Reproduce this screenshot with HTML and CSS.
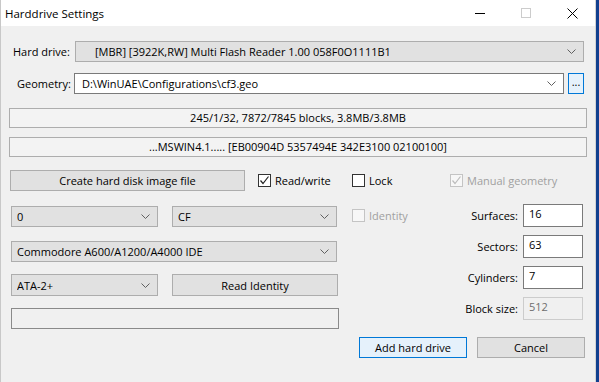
FILE: index.html
```html
<!DOCTYPE html>
<html lang="en">
<head>
    <meta charset="UTF-8">
    <title>Harddrive Settings</title>
    <link rel="stylesheet" href="styles.css">
</head>
<body>
    <div class="window">
        <div class="titlebar">
            <div class="title">Harddrive Settings</div>
            <div class="caption-btn"><span class="min-line"></span></div>
            <div class="caption-btn"><span class="max-box"></span></div>
            <div class="caption-btn">
                <svg width="11" height="11" viewBox="0 0 11 11"><path d="M0.5 0.5 L10.5 10.5 M10.5 0.5 L0.5 10.5" stroke="#000" stroke-width="1" fill="none"/></svg>
            </div>
        </div>

        <div class="dialog">
            <!-- drive + geometry -->
            <div class="row row-drive">
                <label class="lbl lbl-drive">Hard drive:</label>
                <div class="combo combo-drive">
                    <span class="combo-text indent">[MBR] [3922K,RW] Multi Flash Reader 1.00 058F0O1111B1</span>
                    <svg class="chev" width="9" height="5" viewBox="0 0 9 5"><polyline points="0.5,0.5 4.5,4.5 8.5,0.5" stroke="#606060" fill="none"/></svg>
                </div>
            </div>

            <div class="row row-geo">
                <label class="lbl lbl-geo">Geometry:</label>
                <div class="combo edit combo-geo">
                    <span class="combo-text">D:\WinUAE\Configurations\cf3.geo</span>
                    <svg class="chev" width="9" height="5" viewBox="0 0 9 5"><polyline points="0.5,0.5 4.5,4.5 8.5,0.5" stroke="#606060" fill="none"/></svg>
                </div>
                <div class="btn btn-default btn-dots">...</div>
            </div>

            <div class="info info-first">245/1/32, 7872/7845 blocks, 3.8MB/3.8MB</div>
            <div class="info">...MSWIN4.1..... [EB00904D 5357494E 342E3100 02100100]</div>

            <!-- buttons and checks -->
            <div class="row row-checks">
                <div class="btn btn-create">Create hard disk image file</div>
                <div class="check check-rw">
                    <span class="box checked">
                        <svg width="11" height="11" viewBox="0 0 11 11"><polyline points="1.5,5.5 4,8.5 9.5,1.5" stroke="#222" stroke-width="1.2" fill="none"/></svg>
                    </span>
                    <span>Read/write</span>
                </div>
                <div class="check check-lock">
                    <span class="box"></span>
                    <span>Lock</span>
                </div>
                <div class="check disabled">
                    <span class="box">
                        <svg width="11" height="11" viewBox="0 0 11 11"><polyline points="1.5,5.5 4,8.5 9.5,1.5" stroke="#bcbcbc" stroke-width="1.2" fill="none"/></svg>
                    </span>
                    <span>Manual geometry</span>
                </div>
            </div>

            <div class="lower">
                <div class="left">
                    <div class="row row-pair">
                        <div class="combo combo-small">
                            <span class="combo-text">0</span>
                            <svg class="chev" width="9" height="5" viewBox="0 0 9 5"><polyline points="0.5,0.5 4.5,4.5 8.5,0.5" stroke="#606060" fill="none"/></svg>
                        </div>
                        <div class="combo combo-cf">
                            <span class="combo-text">CF</span>
                            <svg class="chev" width="9" height="5" viewBox="0 0 9 5"><polyline points="0.5,0.5 4.5,4.5 8.5,0.5" stroke="#606060" fill="none"/></svg>
                        </div>
                    </div>
                    <div class="combo combo-ctrl">
                        <span class="combo-text">Commodore A600/A1200/A4000 IDE</span>
                        <svg class="chev" width="9" height="5" viewBox="0 0 9 5"><polyline points="0.5,0.5 4.5,4.5 8.5,0.5" stroke="#606060" fill="none"/></svg>
                    </div>
                    <div class="row row-ata">
                        <div class="combo combo-small">
                            <span class="combo-text">ATA-2+</span>
                            <svg class="chev" width="9" height="5" viewBox="0 0 9 5"><polyline points="0.5,0.5 4.5,4.5 8.5,0.5" stroke="#606060" fill="none"/></svg>
                        </div>
                        <div class="btn btn-identity">Read Identity</div>
                    </div>
                    <div class="readonly"></div>
                </div>

                <div class="right">
                    <div class="field field-first">
                        <div class="check disabled check-id">
                            <span class="box"></span>
                            <span>Identity</span>
                        </div>
                        <label class="flbl">Surfaces:</label>
                        <div class="input">16</div>
                    </div>
                    <div class="field">
                        <label class="flbl">Sectors:</label>
                        <div class="input">63</div>
                    </div>
                    <div class="field">
                        <label class="flbl">Cylinders:</label>
                        <div class="input">7</div>
                    </div>
                    <div class="field">
                        <label class="flbl">Block size:</label>
                        <div class="input input-disabled">512</div>
                    </div>
                    <div class="actions">
                        <div class="btn btn-default btn-action">Add hard drive</div>
                        <div class="btn btn-action">Cancel</div>
                    </div>
                </div>
            </div>
        </div>
    </div>
</body>
</html>
```

FILE: styles.css
```css
* {
    margin: 0;
    padding: 0;
    box-sizing: border-box;
}

body {
    background: #12408f;
    width: 599px;
    height: 382px;
    overflow: hidden;
    font-family: "Segoe UI", "Open Sans", "Liberation Sans", sans-serif;
    font-size: 11px;
    line-height: 15px;
    color: #000;
    white-space: nowrap;
}

.window {
    width: 596px;
    height: 382px;
    background: #f0f0f0;
    border-right: 1px solid #d4d4d4;
    border-left: 1px solid #c8c8c8;
}

.titlebar {
    height: 26px;
    background: #fff;
    display: flex;
    align-items: center;
}

.title {
    flex: 1;
    padding-left: 4px;
    font-size: 11.5px;
}

.caption-btn {
    width: 46px;
    height: 26px;
    display: flex;
    align-items: center;
    justify-content: center;
}

.min-line {
    width: 10px;
    height: 1px;
    background: #000;
}

.max-box {
    width: 10px;
    height: 10px;
    border: 1px solid #cccccc;
}

.dialog {
    padding-top: 15px;
}

.row {
    display: flex;
    align-items: center;
}

.lbl {
    flex-shrink: 0;
}

.lbl-drive {
    width: 74px;
    padding-left: 12px;
}

.lbl-geo {
    width: 73px;
    padding-left: 16px;
}

.row-geo {
    margin-top: 11px;
}

/* combo boxes */
.combo {
    height: 21px;
    background: #e1e1e1;
    border: 1px solid #adadad;
    display: flex;
    align-items: center;
    padding: 0 7px 0 5px;
}

.combo-text {
    flex: 1;
    overflow: hidden;
}

.combo-text.indent {
    padding-left: 14px;
}

.chev {
    flex-shrink: 0;
}

.combo.edit {
    background: #fff;
    border-color: #7a7a7a;
    padding-left: 7px;
}

.combo-drive {
    width: 509px;
}

.combo-geo {
    width: 490px;
}

.btn {
    height: 21px;
    background: #e1e1e1;
    border: 1px solid #adadad;
    display: flex;
    align-items: center;
    justify-content: center;
}

.btn-default {
    background: #e5f1fb;
    border-color: #0078d7;
}

.btn-dots {
    width: 16px;
    margin-left: 4px;
    padding-bottom: 4px;
}

.info {
    margin: 9px 0 0 8px;
    width: 578px;
    height: 20px;
    background: #f3f3f3;
    border: 1px solid #adadad;
    text-align: center;
    line-height: 18px;
}

.info-first {
    margin-top: 14px;
}

.row-checks {
    margin-top: 13px;
    padding-left: 9px;
}

.btn-create {
    width: 235px;
}

.check {
    display: flex;
    align-items: center;
    gap: 4px;
}

.box {
    width: 13px;
    height: 13px;
    border: 1px solid #333;
    background: #fff;
    display: flex;
    align-items: center;
    justify-content: center;
}

.check.disabled {
    color: #a0a0a0;
}

.check.disabled .box {
    border-color: #c4c4c4;
    background: #f7f7f7;
}

.check-rw {
    margin-left: 13px;
    width: 94px;
}

.check-lock {
    width: 98px;
}

/* lower area */
.lower {
    display: flex;
    margin-top: 13px;
    padding-left: 10px;
}

.left {
    width: 328px;
    padding-top: 2px;
}

.row-pair {
    gap: 14px;
}

.combo-small {
    width: 147px;
}

.combo-cf {
    width: 165px;
}

.combo-ctrl {
    width: 326px;
    margin-top: 14px;
}

.row-ata {
    margin-top: 12px;
    gap: 14px;
}

.row-ata .combo {
    height: 22px;
}

.btn-identity {
    width: 166px;
    height: 22px;
}

.readonly {
    margin-top: 12px;
    width: 328px;
    height: 21px;
    border: 1px solid #8a8a8a;
    background: #f0f0f0;
}

.right {
    margin-left: 13px;
    width: 233px;
}

.field {
    display: flex;
    align-items: center;
    justify-content: flex-end;
    padding-right: 2px;
    margin-top: 8px;
}

.field-first {
    margin-top: 0;
}

.check-id {
    margin-right: auto;
}

.flbl {
    margin-right: 5px;
}

.input {
    width: 60px;
    height: 23px;
    background: #fff;
    border: 1px solid #7a7a7a;
    padding: 1px 0 0 5px;
}

.input-disabled {
    background: #f0f0f0;
    border-color: #cccccc;
    color: #6d6d6d;
}

.actions {
    display: flex;
    justify-content: flex-end;
    gap: 10px;
    margin-top: 17px;
}

.btn-action {
    width: 108px;
}
```
